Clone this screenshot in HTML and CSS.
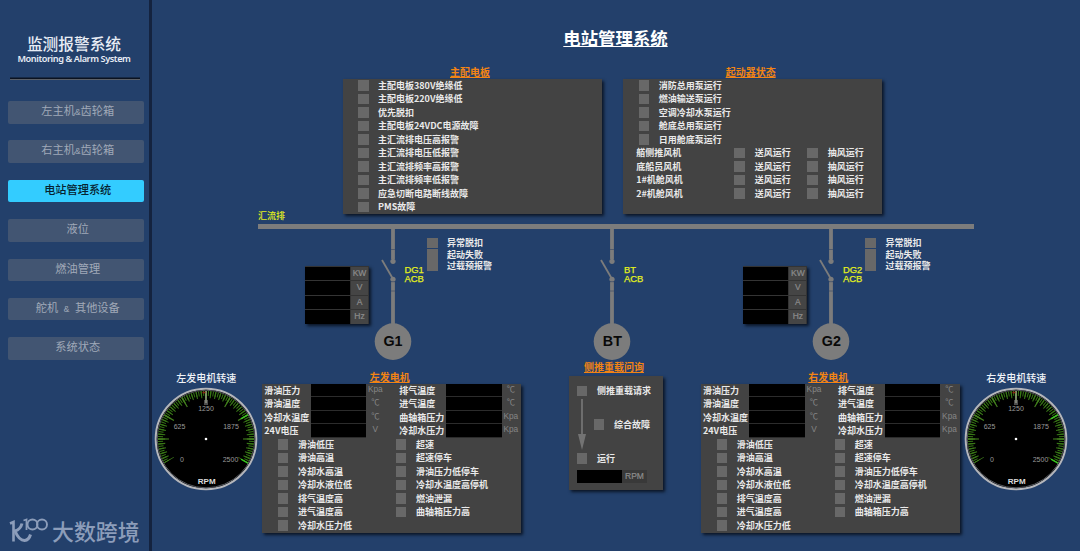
FILE: index.html
```html
<!DOCTYPE html>
<html lang="zh-CN">
<head>
<meta charset="utf-8">
<title>电站管理系统</title>
<link rel="stylesheet" href="styles.css">
</head>
<body>
<svg class="defs" width="0" height="0" aria-hidden="true">
  <symbol id="gauge" viewBox="-52 -52 104 104">
    <circle r="50.3" fill="#000" stroke="#b4b6bb" stroke-width="2"/>
    <circle r="48.8" fill="none" stroke="#55585e" stroke-width="1"/>
    <path class="tick minor" pathLength="80" d="M-39.4 22.75A45.5 45.5 0 1 1 39.4 22.75"/>
    <path class="tick mid" pathLength="40" d="M-38.54 22.25A44.5 44.5 0 1 1 38.54 22.25"/>
    <path class="tick major" pathLength="8" d="M-36.8 21.25A42.5 42.5 0 1 1 36.8 21.25"/>
    <path d="M35 -20.2L42 -24.2M35 20.2L42 24.2" stroke="#37cf1f" stroke-width="1.3"/>
    <path d="M0 -39V-34" stroke="#4d4d4d" stroke-width="4"/>
    <path d="M0 -48V-36" stroke="#a5aa95" stroke-width="1.2"/>
    <path d="M-3.5 -46.5h3" stroke="#8c2412" stroke-width="1.6"/>
    <circle r="1.3" fill="#fff"/>
  </symbol>
  <symbol id="breaker" viewBox="-20 0 40 140">
    <path d="M0 0V30M0 53V96" stroke="#7c7c7c" stroke-width="3.8"/>
    <path d="M-11 31L0 50" stroke="#7c7c7c" stroke-width="1.8"/>
    <circle cy="32.3" r="2.6" fill="#7c7c7c"/><circle cy="50.3" r="2.6" fill="#7c7c7c"/>
    <path d="M-2 20.5h4M-2 52.7h4M-2 62h4" stroke="#46536a" stroke-width=".8"/>
    <circle cy="112.6" r="18.3" fill="#7c7c7c"/>
  </symbol>
</svg>

<aside class="sidebar">
  <header class="brand">
    <div class="brand-cn">监测报警系统</div>
    <div class="brand-en">Monitoring &amp; Alarm System</div>
  </header>
  <nav class="menu">
    <a class="item">左主机<span class="amp">&amp;</span>齿轮箱</a>
    <a class="item">右主机<span class="amp">&amp;</span>齿轮箱</a>
    <a class="item active">电站管理系统</a>
    <a class="item">液位</a>
    <a class="item">燃油管理</a>
    <a class="item">舵机<span class="amp"> &amp; </span>其他设备</a>
    <a class="item">系统状态</a>
  </nav>
  <footer class="mark">
    <svg width="40" height="26" viewBox="0 0 40 26" fill="none" stroke="#8c9dba">
      <path d="M1 5.500L4.500 4V23.500" stroke-width="2.600"/>
      <path d="M13 5.500Q11.500 11.500 6 13Q10 22.500 15.500 22.500Q20 22 21.500 16.500" stroke-width="3"/>
      <path d="M14.500 2.500L17.500 1.500V12" stroke-width="1.800"/>
      <circle cx="23.500" cy="6.500" r="5" stroke-width="1.900"/><circle cx="33" cy="6.500" r="5" stroke-width="1.900"/>
    </svg>
    <span>大数跨境</span>
  </footer>
</aside>

<main class="station">
  <h1>电站管理系统</h1>

  <div class="boards">
    <section class="block">
      <h2>主配电板</h2>
      <ul class="panel board lamps">
        <li>主配电板380V绝缘低</li><li>主配电板220V绝缘低</li><li>优先脱扣</li><li>主配电板24VDC电源故障</li><li>主汇流排电压高报警</li>
        <li>主汇流排电压低报警</li><li>主汇流排频率高报警</li><li>主汇流排频率低报警</li><li>应急切断电路断线故障</li><li>PMS故障</li>
      </ul>
    </section>
    <section class="block">
      <h2>起动器状态</h2>
      <div class="panel board">
        <ul class="lamps">
          <li>消防总用泵运行</li><li>燃油输送泵运行</li><li>空调冷却水泵运行</li><li>舱底总用泵运行</li><li>日用舱底泵运行</li>
        </ul>
        <div class="fans">
          <span>艏侧推风机</span><i class="lamp"></i><span>送风运行</span><i class="lamp"></i><span>抽风运行</span>
          <span>底船员风机</span><i class="lamp"></i><span>送风运行</span><i class="lamp"></i><span>抽风运行</span>
          <span>1#机舱风机</span><i class="lamp"></i><span>送风运行</span><i class="lamp"></i><span>抽风运行</span>
          <span>2#机舱风机</span><i class="lamp"></i><span>送风运行</span><i class="lamp"></i><span>抽风运行</span>
        </div>
      </div>
    </section>
  </div>

  <section class="diagram">
    <span class="bus-name">汇流排</span>
    <div class="bus"></div>

    <div class="unit dg1">
      <svg width="40" height="140"><use href="#breaker"/></svg>
      <b class="node">G1</b><span class="acb">DG1<br>ACB</span>
      <div class="meter"><i></i><b>KW</b><i></i><b>V</b><i></i><b>A</b><i></i><b>Hz</b></div>
      <ul class="lamps trips"><li>异常脱扣</li><li>起动失败</li><li>过载预报警</li></ul>
    </div>
    <div class="unit bt">
      <svg width="40" height="140"><use href="#breaker"/></svg>
      <b class="node">BT</b><span class="acb">BT<br>ACB</span>
    </div>
    <div class="unit dg2">
      <svg width="40" height="140"><use href="#breaker"/></svg>
      <b class="node">G2</b><span class="acb">DG2<br>ACB</span>
      <div class="meter"><i></i><b>KW</b><i></i><b>V</b><i></i><b>A</b><i></i><b>Hz</b></div>
      <ul class="lamps trips"><li>异常脱扣</li><li>起动失败</li><li>过载预报警</li></ul>
    </div>
  </section>

  <div class="machines">
    <section class="speed left">
      <h3>左发电机转速</h3>
      <svg width="104" height="104" viewBox="-52 -52 104 104">
        <use href="#gauge" x="-52" y="-52" width="104" height="104"/>
        <g class="scale">
          <text x="0" y="-28.500">1250</text><text x="-26.500" y="-10">625</text><text x="25" y="-10">1875</text>
          <text x="-24" y="23">0</text><text x="24.500" y="23">2500</text>
        </g>
        <text class="rpm" x="0.700" y="45">RPM</text>
      </svg>
    </section>

    <section class="block generator">
      <h2>左发电机</h2>
      <div class="panel">
        <div class="readings">
          <span>滑油压力</span><i></i><em>Kpa</em><span>排气温度</span><i></i><em>℃</em>
          <span>滑油温度</span><i></i><em>℃</em><span>进气温度</span><i></i><em>℃</em>
          <span>冷却水温度</span><i></i><em>℃</em><span>曲轴箱压力</span><i></i><em>Kpa</em>
          <span>24V电压</span><i></i><em>V</em><span>冷却水压力</span><i></i><em>Kpa</em>
        </div>
        <div class="alarms">
          <ul class="lamps"><li>滑油低压</li><li>滑油高温</li><li>冷却水高温</li><li>冷却水液位低</li><li>排气温度高</li><li>进气温度高</li><li>冷却水压力低</li></ul>
          <ul class="lamps"><li>超速</li><li>超速停车</li><li>滑油压力低停车</li><li>冷却水温度高停机</li><li>燃油泄漏</li><li>曲轴箱压力高</li></ul>
        </div>
      </div>
    </section>

    <section class="block inquiry">
      <h2>侧推重载问询</h2>
      <div class="panel flow">
        <div class="step"><i class="lamp"></i>侧推重载请求</div>
        <div class="between">
          <svg width="10" height="51" viewBox="0 0 10 51"><path d="M4.100 0h1.800v35h3.100L5 51 1 35h3.100z" fill="#737373"/></svg>
          <div class="step"><i class="lamp"></i>综合故障</div>
        </div>
        <div class="step"><i class="lamp"></i>运行</div>
        <div class="rpm-box"><i></i><b>RPM</b></div>
      </div>
    </section>

    <section class="block generator right">
      <h2>右发电机</h2>
      <div class="panel">
        <div class="readings">
          <span>滑油压力</span><i></i><em>Kpa</em><span>排气温度</span><i></i><em>℃</em>
          <span>滑油温度</span><i></i><em>℃</em><span>进气温度</span><i></i><em>℃</em>
          <span>冷却水温度</span><i></i><em>℃</em><span>曲轴箱压力</span><i></i><em>Kpa</em>
          <span>24V电压</span><i></i><em>V</em><span>冷却水压力</span><i></i><em>Kpa</em>
        </div>
        <div class="alarms">
          <ul class="lamps"><li>滑油低压</li><li>滑油高温</li><li>冷却水高温</li><li>冷却水液位低</li><li>排气温度高</li><li>进气温度高</li><li>冷却水压力低</li></ul>
          <ul class="lamps"><li>超速</li><li>超速停车</li><li>滑油压力低停车</li><li>冷却水温度高停机</li><li>燃油泄漏</li><li>曲轴箱压力高</li></ul>
        </div>
      </div>
    </section>

    <section class="speed">
      <h3>右发电机转速</h3>
      <svg width="104" height="104" viewBox="-52 -52 104 104">
        <use href="#gauge" x="-52" y="-52" width="104" height="104"/>
        <g class="scale">
          <text x="0" y="-28.500">1250</text><text x="-26.500" y="-10">625</text><text x="25" y="-10">1875</text>
          <text x="-24" y="23">0</text><text x="24.500" y="23">2500</text>
        </g>
        <text class="rpm" x="0.700" y="45">RPM</text>
      </svg>
    </section>
  </div>
</main>
</body>
</html>
```
FILE: styles.css
```css
* { box-sizing: border-box; }
body {
  margin: 0;
  width: 1080px;
  height: 551px;
  overflow: hidden;
  display: flex;
  background: #23406b;
  color: #e9e9e9;
  font: bold 9px/13.5px "Noto Sans CJK SC", sans-serif;
  white-space: nowrap;
}
h1, h2, h3, ul { margin: 0; padding: 0; }
ul { list-style: none; }
.defs { position: absolute; }

/* Sidebar */
.sidebar {
  width: 152px;
  height: 551px;
  display: flex;
  flex-direction: column;
  padding: 33px 0 0 8px;
  border-right: 3px solid #14233f;
}
.brand {
  width: 130px;
  height: 47px;
  margin-left: 2px;
  padding-right: 2px;
  text-align: center;
  border-bottom: 1.500px solid #5b6068;
  box-shadow: inset 0 -1.500px #0b1220;
  color: #e8edf5;
}
.brand-cn { font-size: 15.700px; font-weight: 500; line-height: 21px; }
.brand-en { font: 600 9.200px/10px "Noto Sans", sans-serif; letter-spacing: -.43px; }
.menu { display: flex; flex-direction: column; gap: 16.900px; margin-top: 21px; }
.item {
  width: 135.500px;
  height: 22.500px;
  padding-left: 4px;
  border-radius: 2px;
  background: #425572;
  color: #a0a9b8;
  font-size: 11.200px;
  font-weight: 400;
  line-height: 19px;
  text-align: center;
}
.item.active { background: #33ccff; color: #06222f; font-weight: 500; }
.amp { font: 9.330px "Liberation Mono", monospace; white-space: pre; }
.mark {
  display: flex;
  align-items: center;
  gap: 3px;
  margin: auto 0 5px 1px;
  color: #8c9dba;
  font-size: 21.900px;
  font-weight: 500;
  line-height: 30px;
}
.mark svg { flex: none; }

/* Shared blocks */
.station { width: 928px; }
h1 {
  height: 65px;
  padding: 25px 1px 0 0;
  font-size: 17.400px;
  line-height: 26px;
  text-align: center;
  color: #fff;
  text-decoration: underline 1px;
  text-underline-offset: 1px;
}
h2 {
  font-size: 10px;
  line-height: 13.500px;
  padding-right: 4px;
  text-align: center;
  color: #f28414;
  text-decoration: underline 1px;
  text-underline-offset: 1px;
}
.panel { background: #434343; box-shadow: 2px 2px 3px #0b1526; }
.lamp, .lamps li::before {
  content: "";
  flex: none;
  display: block;
  width: 10.500px;
  height: 10.500px;
  background: #686868;
}
.lamps li { display: flex; align-items: center; gap: 9.500px; height: 13.530px; }

/* Switchboards */
.boards { display: flex; gap: 21.700px; padding-left: 190.500px; }
.boards .block { width: 259px; }
.board { height: 135.500px; }
.lamps.board, .board .lamps { padding-left: 15.500px; }
.fans {
  display: grid;
  grid-template-columns: 98px 20.500px 52.500px 20.500px 1fr;
  grid-auto-rows: 13.530px;
  align-items: center;
  padding-left: 13px;
}

/* One-line diagram */
.diagram { position: relative; height: 146px; }
.bus-name { position: absolute; left: 106px; top: -5px; color: #e3f01c; font-weight: 500; }
.bus { position: absolute; left: 106px; top: 9.500px; width: 716px; height: 5.500px; background: #7c7c7c; }
.unit { position: absolute; top: 15px; width: 40px; height: 132px; }
.dg1 { left: 221px; }
.bt { left: 440.400px; }
.dg2 { left: 659.400px; }
.node {
  position: absolute;
  left: 0;
  top: 103px;
  width: 40px;
  text-align: center;
  color: #090909;
  font: bold 14.300px/18px "Liberation Sans", sans-serif;
}
.acb {
  position: absolute;
  left: 31.500px;
  top: 35.500px;
  color: #e3f01c;
  font: 9.400px/9px "Liberation Sans", sans-serif;
  -webkit-text-stroke: .25px #e3f01c;
}
.meter {
  position: absolute;
  left: -68.500px;
  top: 37px;
  display: grid;
  grid-template-columns: 45px 17px;
  grid-auto-rows: 13.600px;
  gap: 1px;
  padding: .5px;
  background: #343434;
  box-shadow: 2px 2px 3px #0b1526;
}
.meter i { background: #000; }
.meter b, .rpm-box b {
  background: #454545;
  color: #8d8d8d;
  text-align: center;
  font: 8.500px/12px "Liberation Sans", sans-serif;
  -webkit-text-stroke: .2px #8d8d8d;
}
.trips { position: absolute; left: 54px; top: 8.500px; }
.trips li { height: 11.300px; }

/* Generators and gauges */
.machines { display: flex; align-items: flex-start; }
.speed { width: 114px; padding-top: 10.500px; text-align: center; }
.speed.left { width: 110.300px; padding-right: 2px; }
.speed:not(.left) { padding-right: 1px; }
.speed h3 { font-size: 10px; font-weight: 500; line-height: 13.500px; color: #f0f3f8; }
.speed svg { display: block; margin: 3.200px auto 0; }
.tick { fill: none; stroke: #377716; }
.minor { stroke-width: 5; stroke-dasharray: .42 .58; stroke-dashoffset: .21; }
.mid { stroke-width: 7; stroke-dasharray: .24 .76; stroke-dashoffset: .12; }
.major { stroke-width: 11; stroke-dasharray: .06 .94; stroke-dashoffset: .03; stroke: #43801e; }
.scale text { font: 7px "Liberation Sans", sans-serif; fill: #9a9a9a; text-anchor: middle; }
.rpm { font: bold 8px "Liberation Sans", sans-serif; fill: #dcdcdc; text-anchor: middle; }

.generator { width: 258.700px; padding-top: 10px; }
.generator .panel { height: 149px; }
.readings {
  display: grid;
  grid-template-columns: 46.500px 55.500px 33px 47px 55.500px 1fr;
  grid-auto-rows: 13.550px;
  padding-left: 2px;
}
.readings i { background: #000; border-bottom: 1px solid #2c2c2c; }
.readings em {
  width: 18px;
  color: #868686;
  font: 8.300px/11px "Liberation Sans", "Noto Sans CJK SC", sans-serif;
  text-align: center;
}
.alarms { display: grid; grid-template-columns: 118px 1fr; padding-left: 15.700px; }

.inquiry { width: 94px; margin-left: 48px; }
.inquiry .panel { height: 114.500px; margin-top: 2px; padding: 8.500px 0 0 8px; }
.inquiry h2 { padding-right: 4px; }
.step { display: flex; align-items: center; gap: 9.500px; height: 13.500px; }
.between { display: flex; align-items: center; gap: 7px; height: 54px; }
.rpm-box { display: grid; grid-template-columns: 45px 25px; height: 13px; margin-top: 4.500px; }
.rpm-box i { background: #000; }
.rpm-box b { background: #393939; }
.right { margin-left: 38px; }
```
